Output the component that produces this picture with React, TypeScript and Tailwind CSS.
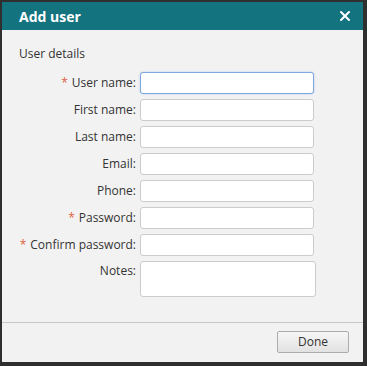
import { X } from 'lucide-react';

const fields = [
  { label: 'User name:', required: true, focused: true },
  { label: 'First name:' },
  { label: 'Last name:' },
  { label: 'Email:' },
  { label: 'Phone:' },
  { label: 'Password:', required: true },
  { label: 'Confirm password:', required: true },
];

export default function App() {
  return (
    <div
      className="w-[367px] h-[366px] bg-[#2f2f2f] pl-[2px] pt-[2px] pr-[4px] pb-[4px] text-[#333]"
      style={{ fontFamily: '"Open Sans", "Noto Sans", sans-serif' }}
    >
      <div className="flex flex-col h-full bg-[#f2f2f2]">
        <div className="flex items-center justify-between h-[28px] pl-[17px] pr-[10px] bg-[#13737f]">
          <span className="text-white font-bold text-[14px]">Add user</span>
          <X className="w-[16px] h-[16px] text-white" strokeWidth={3} />
        </div>

        <div className="flex-1 pt-[16px]">
          <div className="pl-[17px] text-[12px] leading-[16px]">User details</div>
          <div className="flex flex-col gap-[5px] mt-[10px]">
            {fields.map((f) => (
              <div key={f.label} className="flex items-center h-[22px]">
                <div className="w-[138px] pr-[4px] text-right text-[12px] leading-[16px]">
                  {f.required && <span className="text-[#e0603f] mr-[4px]">*</span>}
                  {f.label}
                </div>
                <div
                  className={
                    f.focused
                      ? 'w-[174px] h-[22px] bg-white rounded-[3px] border border-[#7ea7dc] shadow-[0_0_2px_#a9c6ee]'
                      : 'w-[174px] h-[22px] bg-white rounded-[3px] border border-[#cccccc]'
                  }
                />
              </div>
            ))}
            <div className="flex items-start">
              <div className="w-[138px] pr-[4px] pt-[2px] text-right text-[12px] leading-[16px]">Notes:</div>
              <div className="w-[176px] h-[36px] bg-white rounded-[3px] border border-[#cccccc]" />
            </div>
          </div>
        </div>

        <div className="flex justify-end h-[40px] pt-[8px] pr-[14px] border-t border-[#c8c8c8]">
          <button className="w-[72px] h-[22px] text-[12px] text-[#333] rounded-[2px] border border-[#acacac] bg-gradient-to-b from-[#f6f6f6] to-[#e2e2e2]">
            Done
          </button>
        </div>
      </div>
    </div>
  );
}
